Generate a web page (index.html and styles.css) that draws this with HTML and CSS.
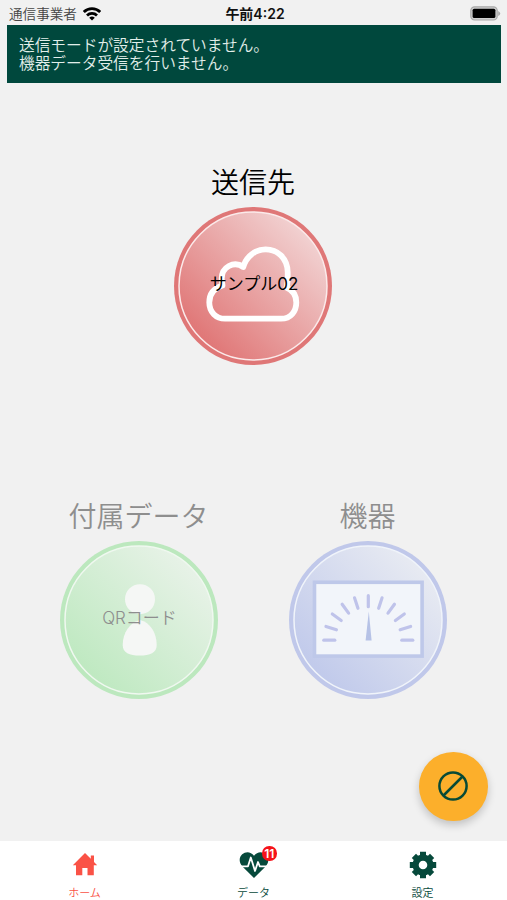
FILE: index.html
```html
<!DOCTYPE html>
<html lang="ja">
<head>
  <meta charset="UTF-8">
  <meta name="viewport" content="width=device-width, initial-scale=1.0">
  <title>ホーム</title>
  <link rel="stylesheet" href="styles.css">
</head>
<body>

<div class="status-bar">
  <div class="carrier">
    <span>通信事業者</span>
    <svg width="18" height="14" viewBox="0 0 18 14" fill="none" stroke="#000" stroke-width="2.8">
      <path d="M.8 5a11.5 11.5 0 0 1 16.4 0"/>
      <path d="M4 8.4a7.2 7.2 0 0 1 10 0"/>
      <path d="M9 13.4L6.2 10.7a4.2 4.2 0 0 1 5.6 0z" fill="#000" stroke="none"/>
    </svg>
  </div>
  <div class="time">午前4:22</div>
  <svg class="battery" width="31" height="15" viewBox="0 0 31 15">
    <rect x="0.8" y="0.8" width="26.4" height="13.2" rx="3.8" fill="#d0d0d0" stroke="#a9a9a9" stroke-width="1.2"/>
    <rect x="2.6" y="2.7" width="22.8" height="9.4" rx="1.6" fill="#000"/>
    <path d="M28.2 5v5q2-1 2-2.5t-2-2.5z" fill="#a9a9a9"/>
  </svg>
</div>

<div class="notice">
  <div>送信モードが設定されていません。</div>
  <div>機器データ受信を行いません。</div>
</div>

<main class="home">
  <section class="item">
    <h2>送信先</h2>
    <div class="circle">
      <svg width="158" height="158" viewBox="0 0 158 158">
        <defs>
          <linearGradient id="red" x1="0.15" y1="0.85" x2="0.85" y2="0.15">
            <stop offset="0" stop-color="#e07777"/>
            <stop offset="1" stop-color="#f1d0d0"/>
          </linearGradient>
        </defs>
        <circle cx="79" cy="79" r="79" fill="#df7777"/>
        <circle cx="79" cy="79" r="74" fill="url(#red)" stroke="#fbeaea" stroke-width="1.5"/>
        <path d="M51 111.7H107C117 111.7 122.3 104 122.3 95.5C122.3 88 118.5 83 112.5 80.5C114 76 113.8 70 113.7 65C113.3 51 103.5 42.4 91.5 42.4C81 42.4 72 50 69.3 60C60 53.5 47.5 60 47.7 72L48.5 78.5C40 81 35.3 87 35.3 95.5C35.3 105 42 111.7 51 111.7Z" fill="none" stroke="#fff" stroke-width="5.8" stroke-linejoin="round"/>
      </svg>
      <span class="circle-label">サンプル02</span>
    </div>
  </section>

  <div class="row">
    <section class="item disabled">
      <h2>付属データ</h2>
      <div class="circle">
        <svg width="158" height="158" viewBox="0 0 158 158">
          <defs>
            <linearGradient id="green" x1="0.15" y1="0.85" x2="0.85" y2="0.15">
              <stop offset="0" stop-color="#bfe9c1"/>
              <stop offset="1" stop-color="#e7f2e7"/>
            </linearGradient>
          </defs>
          <circle cx="79" cy="79" r="79" fill="#bce8be"/>
          <circle cx="79" cy="79" r="74" fill="url(#green)" stroke="#f0f8f0" stroke-width="1.5"/>
          <circle cx="80" cy="58.2" r="15" fill="#f5f7f5"/>
          <path d="M80 79C90 81 96.7 92 96.7 104C96.7 112 90 114.5 79.7 114.5S62.7 112 62.7 104C62.7 92 70 81 80 79Z" fill="#f5f7f5"/>
        </svg>
        <span class="circle-label">QRコード</span>
      </div>
    </section>

    <section class="item disabled">
      <h2>機器</h2>
      <div class="circle">
        <svg width="158" height="158" viewBox="0 0 158 158">
          <defs>
            <linearGradient id="blue" x1="0.15" y1="0.85" x2="0.85" y2="0.15">
              <stop offset="0" stop-color="#c1caeb"/>
              <stop offset="1" stop-color="#e7eaf2"/>
            </linearGradient>
          </defs>
          <circle cx="79" cy="79" r="79" fill="#c0c8ea"/>
          <circle cx="79" cy="79" r="74" fill="url(#blue)" stroke="#f0f4fa" stroke-width="1.5"/>
          <rect x="25.5" y="41.3" width="107.6" height="73.8" fill="#f2f5fa" stroke="#bec8e9" stroke-width="3.6"/>
          <g transform="translate(79.3 99.2)" stroke="#bfc3ea" stroke-width="3.2" stroke-linecap="round">
            <path d="M-44.5 0H-33.5" />
            <path d="M-44.5 0H-33.5" transform="rotate(18)"/>
            <path d="M-44.5 0H-33.5" transform="rotate(36)"/>
            <path d="M-44.5 0H-33.5" transform="rotate(54)"/>
            <path d="M-44.5 0H-33.5" transform="rotate(72)"/>
            <path d="M-44.5 0H-33.5" transform="rotate(90)"/>
            <path d="M-44.5 0H-33.5" transform="rotate(108)"/>
            <path d="M-44.5 0H-33.5" transform="rotate(126)"/>
            <path d="M-44.5 0H-33.5" transform="rotate(144)"/>
            <path d="M-44.5 0H-33.5" transform="rotate(162)"/>
            <path d="M-44.5 0H-33.5" transform="rotate(180)"/>
          </g>
          <path d="M79.8 70.5L82.6 99.5H76.6Z" fill="#b6c2e6"/>
        </svg>
      </div>
    </section>
  </div>
</main>

<button class="fab" type="button" aria-label="送信モード">
  <svg width="32" height="32" viewBox="0 0 32 32" fill="none" stroke="#084a36" stroke-width="2.5">
    <circle cx="16" cy="16" r="13.6"/>
    <path d="M6.5 25.5l19-19"/>
  </svg>
</button>

<nav class="tabs">
  <a class="tab active">
    <svg width="26" height="28" viewBox="0 0 26 28" fill="#fa5246">
      <path d="M13 2L.8 14.2H4V24.2h6.3V17h5.2v7.2h6.3V14.2h3.4l-3.2-3.2V4.5h-3.2v3.2z"/>
    </svg>
    <span>ホーム</span>
  </a>
  <a class="tab">
    <svg width="30" height="28" viewBox="0 0 30 28">
      <path d="M15 27L3.4 15.5C-.6 11.2.2 6 3.2 3.3C7 0 12 .8 15 4.8C18 .8 23 0 26.8 3.3C29.8 6 30.6 11.2 26.6 15.5Z" fill="#06493b"/>
      <path d="M1 15.3H9L11.8 6.5L16 20L19 11L20.8 15.3H28" fill="none" stroke="#fff" stroke-width="1.8" stroke-linejoin="round"/>
    </svg>
    <i class="badge">11</i>
    <span>データ</span>
  </a>
  <a class="tab">
    <svg width="28" height="28" viewBox="0 0 28 28" fill="none" stroke="#06493b">
      <circle cx="14" cy="14" r="7.4" stroke-width="6.2"/>
      <g stroke-width="6">
        <path d="M14 .8V6M14 22v5.2M.8 14H6M22 14h5.2"/>
        <path d="M4.9 4.9l4 4M19.1 19.1l4 4M4.9 23.1l4-4M19.1 8.9l4-4"/>
      </g>
    </svg>
    <span>設定</span>
  </a>
</nav>

</body>
</html>
```
FILE: styles.css
```css
* {
    box-sizing: border-box;
}

body {
    font-family: Inter, "Noto Sans CJK JP", sans-serif;
    background-color: #f1f1f1;
    color: #000;
    margin: 0;
    height: 900px;
    display: flex;
    flex-direction: column;
    overflow: hidden;
}

.status-bar {
    display: grid;
    grid-template-columns: 1fr auto 1fr;
    align-items: center;
    height: 25.4px;
    padding: 2px 6px 0 9px;
    font-size: 13.6px;
    line-height: 20px;
}

.carrier {
    display: flex;
    align-items: center;
    gap: 6px;
    color: #444;
    font-weight: 350;
}

.time {
    font-size: 14px;
    font-weight: 600;
    color: #111;
}

.battery {
    justify-self: end;
}

.notice {
    height: 58px;
    margin: 0 6px 0 7px;
    padding: 12px;
    background-color: #00483d;
    color: #e2eeea;
    font-size: 15.7px;
    font-weight: 350;
    line-height: 18px;
}

.home {
    flex: 1;
    display: flex;
    flex-direction: column;
    align-items: center;
    padding: 79.6px 1px 0 0;
}

.item {
    display: flex;
    flex-direction: column;
    align-items: center;
}

.item h2 {
    margin: 0 0 4px;
    font-size: 28px;
    font-weight: 350;
    line-height: 40px;
}

.circle {
    display: grid;
    place-items: center;
    width: 158px;
    height: 158px;
}

.circle > * {
    grid-area: 1 / 1;
}

.circle svg {
    display: block;
}

.circle-label {
    z-index: 1;
    padding: 0 0 4px 2px;
    font-size: 17px;
    line-height: 24px;
}

.row {
    display: flex;
    gap: 71px;
    margin-top: 132px;
}

.disabled {
    color: #8e8e8e;
}

.disabled .circle-label {
    font-weight: 350;
}

.fab {
    position: absolute;
    left: 419px;
    top: 752px;
    display: grid;
    place-items: center;
    width: 68.5px;
    height: 68.5px;
    padding: 0;
    border: none;
    border-radius: 50%;
    background-color: #fcaf2b;
    box-shadow: 0 4px 9px rgba(0, 0, 0, 0.2);
}

.tabs {
    display: grid;
    grid-template-columns: repeat(3, 1fr);
    height: 59px;
    background-color: #fff;
}

.tab {
    position: relative;
    display: flex;
    flex-direction: column;
    align-items: center;
    gap: 7px;
    padding-top: 10px;
    color: #06493b;
    font-size: 11px;
    font-weight: 350;
    line-height: 15px;
}

.tab.active {
    color: #fa5246;
}

.badge {
    position: absolute;
    left: 93px;
    top: 5px;
    width: 14.5px;
    height: 14.5px;
    border-radius: 50%;
    background-color: #f5131a;
    color: #fff;
    font-size: 12px;
    font-style: normal;
    font-weight: 600;
    line-height: 15px;
    text-align: center;
}
```
